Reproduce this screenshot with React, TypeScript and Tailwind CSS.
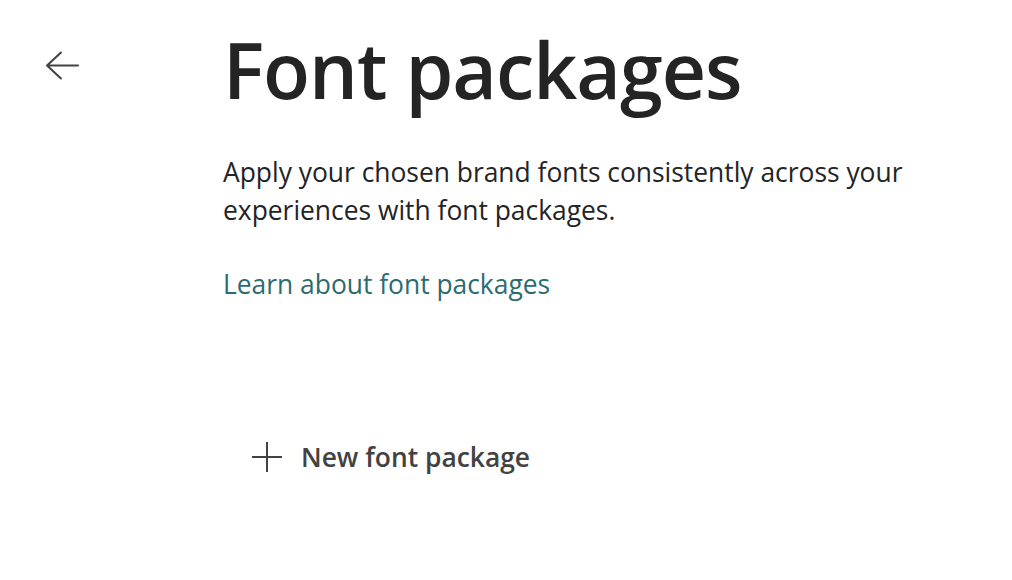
const font = { fontFamily: '"Open Sans", "Noto Sans", sans-serif' };

function BackArrow() {
  return (
    <svg width="34" height="29" viewBox="0 0 34 29" fill="none" aria-hidden>
      <path
        d="M16 1.5 L2 14.5 L16 27.5 M2 14.5 H33"
        stroke="#424242"
        strokeWidth="2"
        strokeLinecap="round"
        strokeLinejoin="round"
      />
    </svg>
  );
}

function PlusIcon() {
  return (
    <svg width="32" height="32" viewBox="0 0 32 32" fill="none" aria-hidden>
      <path d="M16 1 V31 M1 16 H31" stroke="#424242" strokeWidth="2" />
    </svg>
  );
}

export default function App() {
  return (
    <div
      className="flex h-[580px] w-[1012px] bg-white text-[#242424]"
      style={font}
    >
      <div className="w-[223px] shrink-0 pl-[45px] pt-[51px]">
        <button className="block" aria-label="Back">
          <BackArrow />
        </button>
      </div>
      <div className="flex flex-col items-start">
        <h1 className="mt-[20px] text-[77px] font-semibold leading-[100px] tracking-[-1px]">
          Font packages
        </h1>
        <p className="mt-[33px] w-[760px] text-[26.4px] leading-[38px]">
          Apply your chosen brand fonts consistently across your
          <br />
          experiences with font packages.
        </p>
        <a
          href="#"
          className="mt-[36px] text-[26.4px] leading-[38px] text-[#2b6b72]"
        >
          Learn about font packages
        </a>
        <button className="mt-[135px] ml-[28px] flex h-[38px] items-center gap-[18px] text-[26.4px] font-semibold leading-[38px] text-[#424242]">
          <PlusIcon />
          <span>New font package</span>
        </button>
      </div>
    </div>
  );
}
